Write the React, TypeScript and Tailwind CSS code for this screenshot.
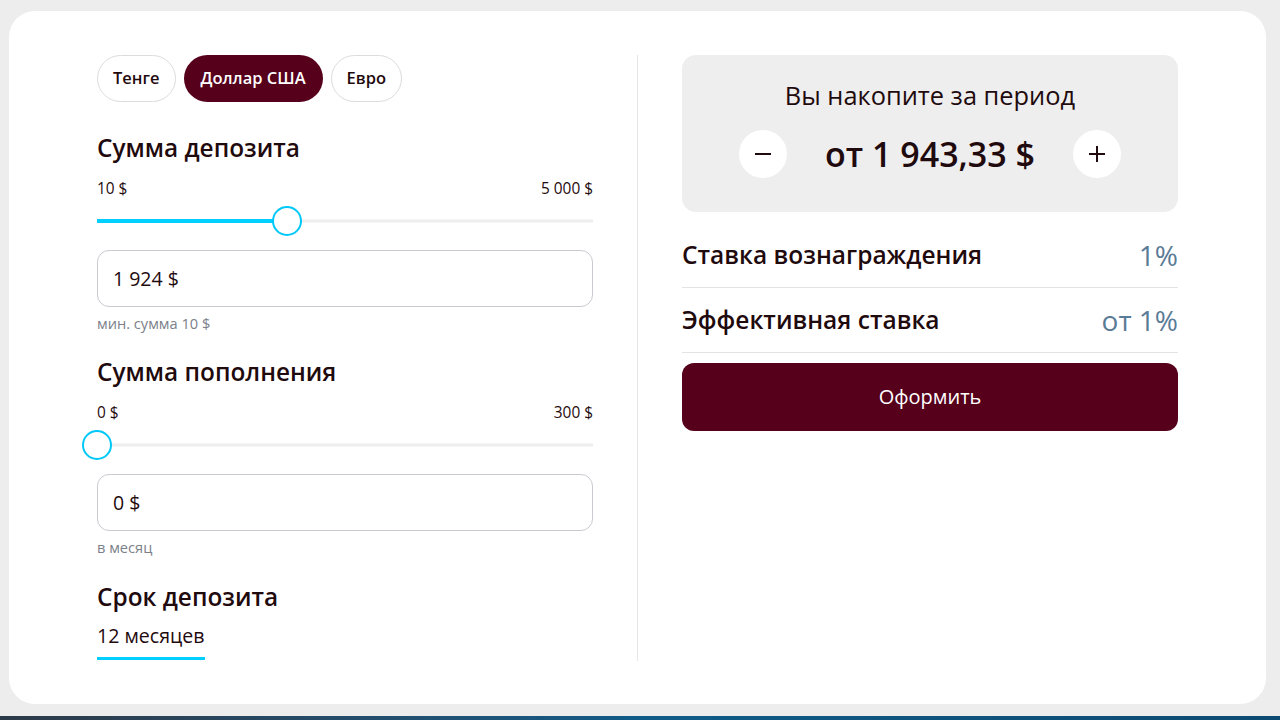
import { useState } from 'react';

const currencies = ['Тенге', 'Доллар США', 'Евро'];

const Slider = ({ min, max, value }: { min: number; max: number; value: number }) => {
  const pct = ((value - min) / (max - min)) * 100;
  return (
    <div className="relative h-[28px] mt-[8px]">
      <div className="absolute left-0 right-0 top-1/2 -translate-y-1/2 h-[3px] bg-[#eeeeee]" />
      <div
        className="absolute left-0 top-1/2 -translate-y-1/2 h-[4px] bg-[#00cfff]"
        style={{ width: `${pct}%` }}
      />
      <div
        className="absolute top-1/2 -translate-x-1/2 -translate-y-1/2 w-[30px] h-[30px] rounded-full bg-white border-2 border-[#00c8f8]"
        style={{ left: `${pct}%` }}
      />
    </div>
  );
};

const AmountBlock = ({
  title,
  min,
  max,
  minLabel,
  maxLabel,
  value,
  inputText,
  hint,
}: {
  title: string;
  min: number;
  max: number;
  minLabel: string;
  maxLabel: string;
  value: number;
  inputText: string;
  hint: string;
}) => (
  <div>
    <h2 className="text-[24.4px] leading-[32px] font-semibold text-[#1f0a0e]">{title}</h2>
    <div className="flex justify-between mt-[15px] text-[15.4px] leading-[20px] text-[#1f0a0e]">
      <span>{minLabel}</span>
      <span>{maxLabel}</span>
    </div>
    <Slider min={min} max={max} value={value} />
    <div className="mt-[15px] h-[57px] rounded-[12px] border border-[#c9c9d2] flex items-center px-[15px] text-[19.5px] text-[#1f0a0e]">
      {inputText}
    </div>
    <div className="mt-[7px] text-[14.6px] leading-[18px] text-[#7b8089]">{hint}</div>
  </div>
);

export default function App() {
  const [active, setActive] = useState(1);

  return (
    <div
      className="w-[1280px] h-[720px] bg-[#ededed] flex flex-col overflow-hidden"
      style={{ fontFamily: '"Open Sans", "Noto Sans", sans-serif' }}
    >
      <div className="mt-[11px] ml-[9px] w-[1257px] h-[693px] bg-white rounded-[26px] flex px-[88px] pt-[44px] pb-[43px]">
        {/* left column */}
        <div className="w-[496px] flex flex-col">
          <div className="flex gap-[8px]">
            {currencies.map((c, i) => (
              <button
                key={c}
                onClick={() => setActive(i)}
                className={
                  i === active
                    ? 'h-[47px] px-[17px] rounded-full bg-[#56001c] text-white text-[16.5px] font-semibold'
                    : 'h-[47px] px-[15px] rounded-full border border-[#dcdcdc] text-[#1f0a0e] text-[16.5px] font-semibold bg-white'
                }
              >
                {c}
              </button>
            ))}
          </div>

          <div className="mt-[30px]">
            <AmountBlock
              title="Сумма депозита"
              min={10}
              max={5000}
              minLabel="10 $"
              maxLabel="5 000 $"
              value={1924}
              inputText="1 924 $"
              hint="мин. сумма 10 $"
            />
          </div>

          <div className="mt-[24px]">
            <AmountBlock
              title="Сумма пополнения"
              min={0}
              max={300}
              minLabel="0 $"
              maxLabel="300 $"
              value={0}
              inputText="0 $"
              hint="в месяц"
            />
          </div>

          <h2 className="mt-[25px] text-[24.4px] leading-[32px] font-semibold text-[#1f0a0e]">Срок депозита</h2>
          <div className="mt-[11px] self-start">
            <div className="text-[19.6px] leading-[24px] text-[#1f0a0e]">12 месяцев</div>
            <div className="mt-[9px] h-[3px] bg-[#00cfff]" />
          </div>
        </div>

        {/* divider */}
        <div className="mx-[44px] w-px bg-[#e6e6e6]" />

        {/* right column */}
        <div className="w-[496px] flex flex-col self-start">
          <div className="h-[157px] rounded-[14px] bg-[#eeeeee] flex flex-col items-center pt-[24px]">
            <div className="text-[25.4px] leading-[32px] font-medium text-[#1f0a0e]">Вы накопите за период</div>
            <div className="mt-[19px] w-full flex items-center justify-between px-[57px]">
              <button className="w-[48px] h-[48px] rounded-full bg-white flex items-center justify-center text-[#1f0a0e]">
                <svg width="20" height="20" viewBox="0 0 20 20">
                  <path d="M2 10h16" stroke="currentColor" strokeWidth="2" />
                </svg>
              </button>
              <div className="text-[34px] leading-[44px] font-semibold text-[#1f0a0e]">от 1 943,33 $</div>
              <button className="w-[48px] h-[48px] rounded-full bg-white flex items-center justify-center text-[#1f0a0e]">
                <svg width="20" height="20" viewBox="0 0 20 20">
                  <path d="M2 10h16M10 2v16" stroke="currentColor" strokeWidth="2" />
                </svg>
              </button>
            </div>
          </div>

          <div className="mt-[11px] h-[65px] flex items-center justify-between border-b border-[#e3e3e3]">
            <span className="text-[24.5px] font-semibold text-[#1f0a0e]">Ставка вознаграждения</span>
            <span className="text-[28px] text-[#5a7b96]">1%</span>
          </div>
          <div className="h-[65px] flex items-center justify-between border-b border-[#e3e3e3]">
            <span className="text-[24.5px] font-semibold text-[#1f0a0e]">Эффективная ставка</span>
            <span className="text-[28px] text-[#5a7b96]">от 1%</span>
          </div>

          <button className="mt-[10px] h-[68px] rounded-[12px] bg-[#56001c] text-white text-[20px]">
            Оформить
          </button>
        </div>
      </div>

      <div className="mt-auto h-[4px] bg-gradient-to-r from-[#2c3a48] via-[#0f5b88] to-[#0c4a72]" />
    </div>
  );
}
